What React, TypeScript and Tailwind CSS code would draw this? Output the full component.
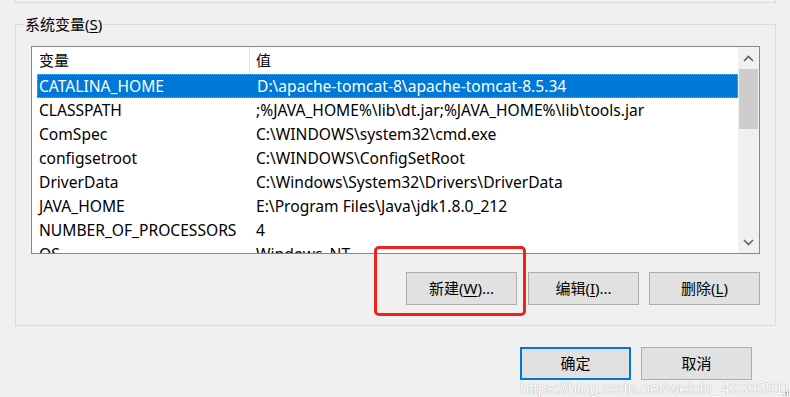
import React from "react";

const rows: [string, string][] = [
  ["CATALINA_HOME", "D:\\apache-tomcat-8\\apache-tomcat-8.5.34"],
  ["CLASSPATH", ";%JAVA_HOME%\\lib\\dt.jar;%JAVA_HOME%\\lib\\tools.jar"],
  ["ComSpec", "C:\\WINDOWS\\system32\\cmd.exe"],
  ["configsetroot", "C:\\WINDOWS\\ConfigSetRoot"],
  ["DriverData", "C:\\Windows\\System32\\Drivers\\DriverData"],
  ["JAVA_HOME", "E:\\Program Files\\Java\\jdk1.8.0_212"],
  ["NUMBER_OF_PROCESSORS", "4"],
  ["OS", "Windows_NT"],
];

function Chevron({ up }: { up?: boolean }) {
  return (
    <svg width="11" height="7" viewBox="0 0 11 7">
      <path
        d={up ? "M1 6 L5.5 1.5 L10 6" : "M1 1 L5.5 5.5 L10 1"}
        fill="none"
        stroke="#606060"
        strokeWidth="1.6"
      />
    </svg>
  );
}

function Btn({ children, primary, className }: { children: React.ReactNode; primary?: boolean; className?: string }) {
  return (
    <div
      className={
        "w-[111px] h-[33px] flex items-center justify-center bg-[#e1e1e1] text-[15px] text-black " +
        (primary ? "border-2 border-[#0078d7] " : "border border-[#adadad] ") +
        (className ?? "")
      }
    >
      {children}
    </div>
  );
}

export default function App() {
  return (
    <div
      className="relative w-[790px] h-[397px] bg-[#f0f0f0] overflow-hidden text-black"
      style={{ fontFamily: '"Noto Sans", "Noto Sans CJK SC", sans-serif' }}
    >
      {/* previous group box bottom */}
      <div className="ml-[15px] w-[761px] h-[3px] border-l border-r border-b border-[#dcdcdc]" />

      {/* system variables group */}
      <div className="relative ml-[15px] mt-[21px] w-[761px] h-[302px] border border-[#dcdcdc] flex flex-col">
        <div className="absolute left-[8px] top-[-11px] px-[1px] bg-[#f0f0f0] text-[15px] leading-[20px]">
          系统变量(<span className="underline underline-offset-2">S</span>)
        </div>

        <div className="ml-[15px] mt-[21px] w-[729px] h-[208px] border border-[#828790] bg-white flex overflow-hidden">
          <div className="flex-1 flex flex-col overflow-hidden text-[15.6px]">
            <div className="h-[27px] shrink-0 flex text-[15px]">
              <div className="w-[218px] border-r border-[#e5e5e5] pl-[7px] flex items-center">变量</div>
              <div className="pl-[6px] flex items-center">值</div>
            </div>
            {rows.map(([k, v], i) => (
              <div
                key={k}
                className={
                  "ml-[5px] h-[24px] pt-[1px] shrink-0 flex items-center whitespace-nowrap " +
                  (i === 0 ? "bg-[#0078d7] text-white border border-dotted border-[#e8953f]" : "")
                }
              >
                <div className={"w-[217px] " + (i === 0 ? "pl-[1px]" : "pl-[2px]")}>{k}</div>
                <div className="pl-[2px]">{v}</div>
              </div>
            ))}
          </div>
          <div className="w-[21px] shrink-0 bg-[#f0f0f0] flex flex-col">
            <div className="h-[22px] flex items-center justify-center">
              <Chevron up />
            </div>
            <div className="h-[60px] mx-[1px] bg-[#cdcdcd]" />
            <div className="flex-1" />
            <div className="h-[22px] flex items-center justify-center">
              <Chevron />
            </div>
          </div>
        </div>

        <div className="mt-[18px] mr-[15px] flex justify-end">
          <Btn>
            新建(<span className="underline underline-offset-2">W</span>)...
          </Btn>
          <Btn className="ml-[11px]">
            编辑(<span className="underline underline-offset-2">I</span>)...
          </Btn>
          <Btn className="ml-[10px]">
            删除(<span className="underline underline-offset-2">L</span>)
          </Btn>
        </div>
      </div>

      {/* OK / Cancel */}
      <div className="mt-[21px] mr-[38px] flex justify-end">
        <Btn primary>确定</Btn>
        <Btn className="ml-[10px]">取消</Btn>
      </div>

      {/* red annotation */}
      <div className="absolute left-[374px] top-[246px] w-[152px] h-[70px] border-[3px] border-[#f21f1f] rounded-[5px]" />

      {/* watermark */}
      <div
        className="absolute left-[520px] top-[379px] text-[16px] leading-[20px] text-white whitespace-nowrap"
        style={{ fontFamily: '"Liberation Sans", Arial, sans-serif', textShadow: "0 0 1px #b0b0b0, 0 0 1px #b0b0b0" }}
      >
        https://blog.csdn.net/weixin_43395911
      </div>
      <div className="absolute right-0 bottom-0 w-[8px] h-[8px] grid grid-cols-3 gap-[1px] p-[1px]">
        <div />
        <div />
        <div className="bg-[#b8b8b8]" />
        <div />
        <div className="bg-[#b8b8b8]" />
        <div className="bg-[#b8b8b8]" />
        <div className="bg-[#b8b8b8]" />
        <div className="bg-[#b8b8b8]" />
        <div className="bg-[#b8b8b8]" />
      </div>
    </div>
  );
}
